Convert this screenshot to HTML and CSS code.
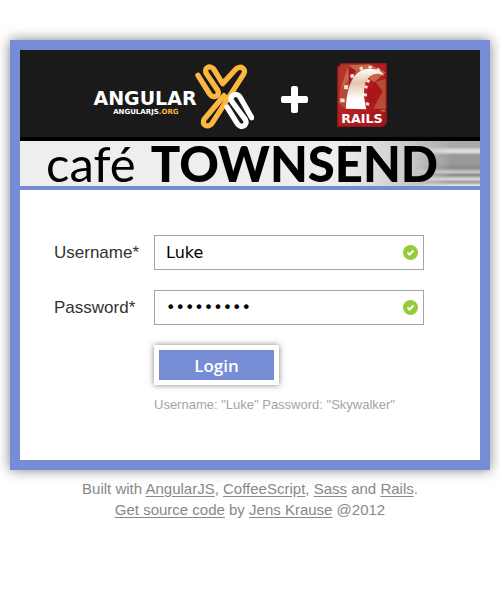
FILE: index.html
```html
<!DOCTYPE html>
<html lang="en">
<head>
<meta charset="utf-8">
<title>Café Townsend</title>
<link rel="stylesheet" href="styles.css">
</head>
<body>
<main class="card">
  <header>
    <div class="logos">
      <div class="angular">
        <div class="angular-name">
          <span class="angular-title">ANGULAR</span>
          <span class="angular-site">ANGULARJS<span class="org">.ORG</span></span>
        </div>
        <svg class="angular-mark" viewBox="0 0 180 204" aria-hidden="true">
          <g fill="none" stroke-width="16" stroke-linecap="round" stroke-linejoin="round">
            <path stroke="#fdb73e" d="M12 40 47 96C58 112 80 101 71 85L38 36C27 19 47 7 59 21L86 65 126 21C139 8 160 22 148 38L54 184C42 200 20 188 31 171L90 101"/>
            <path stroke="#fff" d="M99 135 130 185C140 201 163 190 154 173L114 119C103 102 127 88 138 105L173 167"/>
          </g>
        </svg>
      </div>
      <svg class="plus" viewBox="0 0 27 27" aria-hidden="true"><path d="M10 2Q10 0 12 0H15Q17 0 17 2V10H25Q27 10 27 12V15Q27 17 25 17H17V25Q17 27 15 27H12Q10 27 10 25V17H2Q0 17 0 15V12Q0 10 2 10H10Z" fill="#fff"/></svg>
      <svg class="rails" viewBox="0 0 150 192" role="img" aria-label="Rails">
        <defs>
          <linearGradient id="track" x1="0" y1="0" x2="0" y2="1"><stop offset="0" stop-color="#fff"/><stop offset=".35" stop-color="#e3c5ae"/><stop offset=".75" stop-color="#fff"/></linearGradient>
          <linearGradient id="red" x1="0" y1="0" x2="1" y2="1"><stop offset="0" stop-color="#b33b2c"/><stop offset=".5" stop-color="#b51e21"/><stop offset="1" stop-color="#9d171c"/></linearGradient>
        </defs>
        <path d="M12 0H150V180L139 192H0V12Z" fill="#8d171b"/>
        <path d="M14 4H146V178L137 188H4V14Z" fill="url(#red)"/>
        <path d="M34 7 98 4 146 28 112 58 65 24 10 80Z" fill="#c4664a"/>
        <path d="M10 80 36 48 28 140 4 120ZM116 57 146 48V138L109 137 137 85Z" fill="#b84b38"/>
        <path d="M34 7 58 25 36 64ZM112 57 134 84 106 125 83 100Z" fill="#a9161c"/>
        <path d="M27 137C29 70 49 18 95 17 118 16 137 25 141 38 116 24 90 38 83 67 79 91 82 116 88 139Z" fill="url(#track)"/>
        <path d="M66 15l8-5 6 8-8 5ZM94 9l10-1 1 8-10 1ZM121 15l9 3-3 7-9-3ZM39 35l10-3 3 11-10 3ZM22 66l12 1-1 12-12-1ZM10 106l13 1v11H10ZM91 48l9 4-5 8-8-4ZM83 66l10 3-3 8-9-3ZM81 90l10 3-2 8-9-3ZM86 117l11 3-1 8-10-2Z" fill="#f5dfda"/>
        <text x="75" y="179" text-anchor="middle" class="rails-word">RAILS</text>
        <path d="M131 142h6M134 142v4M139 146v-4l2 3 2-3v4" stroke="#fff" fill="none"/>
      </svg>
    </div>
    <h1 class="brand"><span class="cafe">café</span><span class="townsend">TOWNSEND</span></h1>
  </header>
  <form class="login">
    <label for="user">Username*</label>
    <div class="field">
      <input id="user" type="text" value="Luke">
      <svg class="check" viewBox="0 0 15 15" aria-hidden="true"><circle cx="7.500" cy="7.500" r="7.500" fill="#96cb38"/><path d="M4.500 7.500 6.500 9.500 10.500 5.500" fill="none" stroke="#fff" stroke-width="2"/></svg>
    </div>
    <label for="pass">Password*</label>
    <div class="field">
      <input id="pass" type="password" value="Skywalker">
      <svg class="check" viewBox="0 0 15 15" aria-hidden="true"><circle cx="7.500" cy="7.500" r="7.500" fill="#96cb38"/><path d="M4.500 7.500 6.500 9.500 10.500 5.500" fill="none" stroke="#fff" stroke-width="2"/></svg>
    </div>
    <div class="actions">
      <button type="button">Login</button>
      <p class="hint">Username: "Luke" Password: "Skywalker"</p>
    </div>
  </form>
</main>
<footer>
  <p>Built with <a href="#">AngularJS</a>, <a href="#">CoffeeScript</a>, <a href="#">Sass</a> and <a href="#">Rails</a>.</p>
  <p><a href="#">Get source code</a> by <a href="#">Jens Krause</a> @2012</p>
</footer>
</body>
</html>
```
FILE: styles.css
```css
* { box-sizing: border-box; }
body {
  margin: 0;
  padding: 40px 10px;
  background: #fff;
  font-family: "Liberation Sans", Arial, sans-serif;
}
p, h1 { margin: 0; }
.card {
  max-width: 480px;
  margin: 0 auto;
  border: 10px solid #768dd6;
  background: #fff;
  box-shadow: 0 0 12px rgba(0, 0, 0, .5);
}
header { border-bottom: 4px solid #768dd6; }
.logos {
  display: flex;
  justify-content: center;
  align-items: flex-start;
  padding: 12px 40px 7px 20px;
  background: #1a1a1a;
  border-bottom: 4px solid #000;
}
.angular { display: flex; align-items: flex-start; }
.angular-name {
  display: flex;
  flex-direction: column;
  padding-top: 26px;
  color: #fff;
  font-family: "DejaVu Sans", sans-serif;
  font-weight: bold;
}
.angular-title { font-size: 19px; line-height: 20px; }
.angular-site { font-size: 7px; line-height: 8px; text-align: right; padding-right: 18px; }
.org { color: #fdb73e; }
.angular-mark { width: 60px; height: 68px; margin-left: -3px; }
.plus { width: 27px; height: 27px; margin: 24px 29px 0 27px; }
.rails { width: 50px; height: 64px; margin-top: 1px; }
.rails-word { font: bold 38px "DejaVu Sans", sans-serif; fill: #fff; }
.brand {
  display: flex;
  align-items: baseline;
  gap: 15px;
  padding-left: 26px;
  line-height: 45px;
  color: #000;
  white-space: nowrap;
  font-family: Lato, sans-serif;
  background:
    linear-gradient(90deg, #eee 70%, #c8c8c8 85%, rgba(180, 180, 180, 0) 94%),
    linear-gradient(#aaa 0 6px, #ddd 9px 11px, #999 14px 23px, #888 27px, #ccc 31px, #888 34px, #ddd 38px, #999 41px, #eee 45px);
}
.cafe { font-size: 49px; font-weight: 400; }
.townsend { font-size: 49px; font-weight: 900; }
.login {
  display: grid;
  grid-template-columns: 100px minmax(0, 270px);
  row-gap: 20px;
  align-items: center;
  padding: 45px 34px 47px;
}
label { color: #333; font-size: 17px; }
.field { position: relative; }
.field input {
  display: block;
  width: 100%;
  height: 35px;
  padding: 0 32px 0 11px;
  border: 1px solid #a5a5a5;
  border-radius: 0;
  background: #fff;
  color: #000;
  font: 16px "DejaVu Sans", sans-serif;
}
.check { position: absolute; top: 10px; right: 6px; width: 15px; height: 15px; }
.actions { grid-column: 2; }
button {
  display: block;
  width: 125px;
  height: 40px;
  padding: 0;
  border: 5px solid #fff;
  background: #768dd6;
  box-shadow: 0 0 6px rgba(0, 0, 0, .5);
  color: #fff;
  font: 600 17px "Open Sans", sans-serif;
}
.hint { margin-top: 12px; color: #a5a5a5; font-size: 13px; line-height: 16px; }
footer {
  margin-top: 8px;
  color: #888;
  text-align: center;
  font-size: 15px;
  line-height: 21px;
}
footer a { color: inherit; text-underline-offset: 2px; }
```
